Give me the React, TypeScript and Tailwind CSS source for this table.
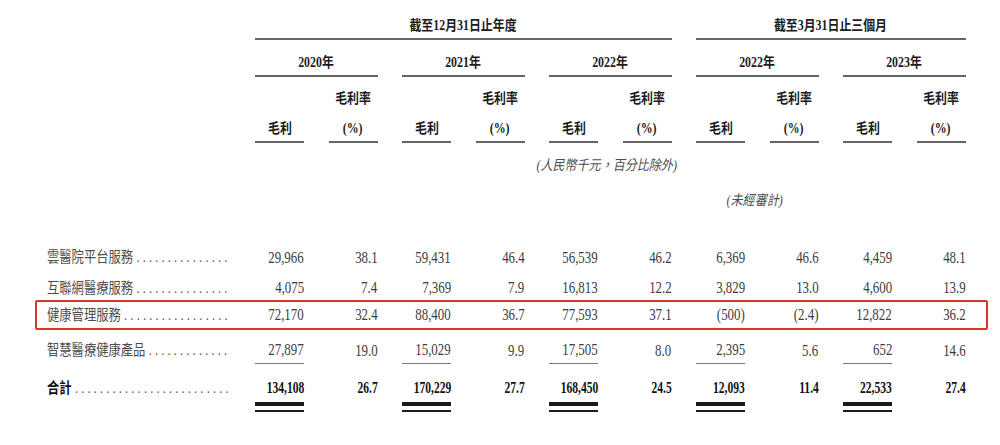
import React from "react";

const FONT = "font-['Liberation_Serif','Noto_Sans_CJK_TC',serif]";

type Row = { label: string; dots: number; values: string[] };

const rows: Row[] = [
  {
    label: "雲醫院平台服務",
    dots: 15,
    values: ["29,966", "38.1", "59,431", "46.4", "56,539", "46.2", "6,369", "46.6", "4,459", "48.1"],
  },
  {
    label: "互聯網醫療服務",
    dots: 15,
    values: ["4,075", "7.4", "7,369", "7.9", "16,813", "12.2", "3,829", "13.0", "4,600", "13.9"],
  },
  {
    label: "健康管理服務",
    dots: 17,
    values: ["72,170", "32.4", "88,400", "36.7", "77,593", "37.1", "(500)", "(2.4)", "12,822", "36.2"],
  },
  {
    label: "智慧醫療健康產品",
    dots: 13,
    values: ["27,897", "19.0", "15,029", "9.9", "17,505", "8.0", "2,395", "5.6", "652", "14.6"],
  },
];

const total: Row = {
  label: "合計",
  dots: 25,
  values: ["134,108", "26.7", "170,229", "27.7", "168,450", "24.5", "12,093", "11.4", "22,533", "27.4"],
};

const years = ["2020年", "2021年", "2022年", "2022年", "2023年"];

const GRID = "grid grid-cols-[repeat(10,49px)] gap-x-[24.5px] w-[710.5px]";

function HeadText({ children }: { children: React.ReactNode }) {
  return (
    <span className="inline-block origin-center scale-x-[0.85] whitespace-nowrap text-[14px] font-bold text-[#1c1c1c]">
      {children}
    </span>
  );
}

function Num({ children, bold }: { children: React.ReactNode; bold?: boolean }) {
  return (
    <span
      className={
        bold
          ? "inline-block origin-right scale-x-[0.68] whitespace-nowrap text-[17px] font-bold text-[#111]"
          : "inline-block origin-right scale-x-[0.76] whitespace-nowrap text-[17px] text-[#3d3d3d]"
      }
    >
      {children}
    </span>
  );
}

function Label({ text, dots, bold }: { text: string; dots: number; bold?: boolean }) {
  return (
    <div className="w-[208px] shrink-0">
      <div className="flex origin-left scale-x-[0.82] items-baseline text-[15px]">
        <span className={bold ? "whitespace-nowrap font-bold text-[#111]" : "whitespace-nowrap text-[#4d4d4d]"}>
          {text}
        </span>
        <span className="ml-[4px] whitespace-nowrap tracking-[3.9px] text-[#555]">{".".repeat(dots)}</span>
      </div>
    </div>
  );
}

function Values({ values }: { values: string[] }) {
  return (
    <div className={GRID}>
      {values.map((v, i) => (
        <div key={i} className="flex justify-end">
          <Num>{v}</Num>
        </div>
      ))}
    </div>
  );
}

export default function App() {
  return (
    <div className={`h-[445px] w-[1000px] overflow-hidden bg-white pt-[12px] ${FONT}`}>
      <div className="ml-[47px] w-[918.5px]">
        {/* group headers */}
        <div className="flex">
          <div className="w-[208px] shrink-0" />
          <div className={GRID}>
            <div className="col-span-6 flex h-[28px] items-center justify-center border-b-2 border-[#666] pt-[1px]">
              <HeadText>截至12月31日止年度</HeadText>
            </div>
            <div className="col-span-4 flex h-[28px] items-center justify-center border-b-2 border-[#666] pt-[1px]">
              <HeadText>截至3月31日止三個月</HeadText>
            </div>
          </div>
        </div>

        {/* years */}
        <div className="flex">
          <div className="w-[208px] shrink-0" />
          <div className={GRID}>
            {years.map((y, i) => (
              <div
                key={i}
                className="col-span-2 flex h-[37px] items-center justify-center border-b-2 border-[#666] pt-[9px]"
              >
                <HeadText>{y}</HeadText>
              </div>
            ))}
          </div>
        </div>

        {/* sub headers */}
        <div className="flex">
          <div className="w-[208px] shrink-0" />
          <div className={GRID}>
            {Array.from({ length: 10 }).map((_, i) => (
              <div
                key={i}
                className="flex h-[66px] flex-col items-center justify-end border-b-2 border-[#666] pb-[2px]"
              >
                {i % 2 === 1 && (
                  <div className="mb-[9px] leading-[20px]">
                    <HeadText>毛利率</HeadText>
                  </div>
                )}
                <div className="leading-[20px]">
                  <HeadText>{i % 2 === 0 ? "毛利" : "(%)"}</HeadText>
                </div>
              </div>
            ))}
          </div>
        </div>

        {/* notes */}
        <div className="flex">
          <div className="w-[208px] shrink-0" />
          <div className={GRID}>
            <div className="col-span-4" />
            <div className="col-span-2 flex h-[44px] items-center justify-center pr-[7px]">
              <span className="inline-block origin-center scale-x-[0.86] whitespace-nowrap text-[14px] italic text-[#4d4d4d]">
                (人民幣千元，百分比除外)
              </span>
            </div>
          </div>
        </div>
        <div className="flex">
          <div className="w-[208px] shrink-0" />
          <div className={GRID}>
            <div className="col-span-6" />
            <div className="col-span-2 flex h-[26px] items-center justify-center pr-[6px]">
              <span className="inline-block origin-center scale-x-[0.86] whitespace-nowrap text-[14px] italic text-[#4d4d4d]">
                (未經審計)
              </span>
            </div>
          </div>
        </div>

        {/* body */}
        <div className="mt-[29px]">
          <div className="flex h-[30px] items-center pt-[1px]">
            <Label text={rows[0].label} dots={rows[0].dots} />
            <Values values={rows[0].values} />
          </div>

          <div className="flex h-[28px] items-center pt-[4px]">
            <Label text={rows[1].label} dots={rows[1].dots} />
            <Values values={rows[1].values} />
          </div>

          <div className="-ml-[12px] -mr-[22px] flex h-[30px] items-center rounded-[2px] border-2 border-[#d9352c] pl-[10px] pr-[20px]">
            <Label text={rows[2].label} dots={rows[2].dots} />
            <Values values={rows[2].values} />
          </div>

          <div className="flex items-start pt-[7px]">
            <div className="flex h-[26px] items-center">
              <Label text={rows[3].label} dots={rows[3].dots} />
            </div>
            <div className={GRID}>
              {rows[3].values.map((v, i) => (
                <div
                  key={i}
                  className={
                    i % 2 === 0
                      ? "flex h-[27px] items-center justify-end border-b border-[#777]"
                      : "flex h-[27px] items-center justify-end"
                  }
                >
                  <Num>{v}</Num>
                </div>
              ))}
            </div>
          </div>

          <div className="flex items-start pt-[12px]">
            <div className="flex h-[24px] items-center">
              <Label text={total.label} dots={total.dots} bold />
            </div>
            <div className={GRID}>
              {total.values.map((v, i) => (
                <div key={i} className="flex flex-col items-end">
                  <div className="flex h-[24px] items-center">
                    <Num bold>{v}</Num>
                  </div>
                  {i % 2 === 0 && (
                    <>
                      <div className="mt-[2px] h-[4px] w-full bg-[#1a1a1a]" />
                      <div className="mt-[4px] h-[2px] w-full bg-[#1a1a1a]" />
                    </>
                  )}
                </div>
              ))}
            </div>
          </div>
        </div>
      </div>
    </div>
  );
}
